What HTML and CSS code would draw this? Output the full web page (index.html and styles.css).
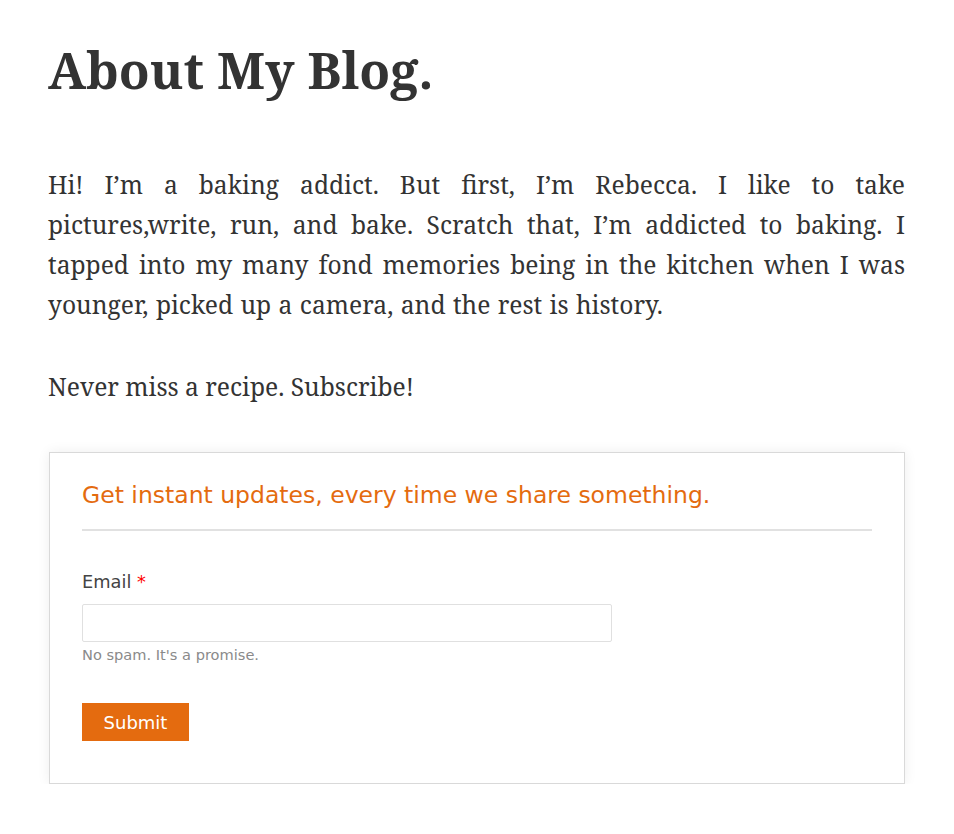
FILE: index.html
```html
<!DOCTYPE html>
<html>
<head>
<meta charset="utf-8">
<link rel="stylesheet" href="styles.css">
</head>
<body>
<main class="page">
  <h1 class="title">About My Blog.</h1>
  <p class="text">Hi! I’m a baking addict. But first, I’m Rebecca. I like to take pictures,write, run, and bake. Scratch that, I’m addicted to baking. I tapped into my many fond memories being in the kitchen when I was younger, picked up a camera, and the rest is history.</p>
  <p class="text">Never miss a recipe. Subscribe!</p>
  <form class="box">
    <h2 class="box-title">Get instant updates, every time we share something.</h2>
    <div class="field">
      <label class="label">Email <span class="req">*</span></label>
      <input class="input" type="text">
      <div class="hint">No spam. It's a promise.</div>
    </div>
    <button class="btn" type="button">Submit</button>
  </form>
</main>
</body>
</html>
```
FILE: styles.css
```css
html, body { margin: 0; padding: 0; background: #fff; }
.page {
  padding: 0 49px 0 48px;
  color: #333;
  font-family: "Noto Serif", "Droid Serif", "DejaVu Serif", serif;
}
.title {
  margin: 0;
  padding-top: 35px;
  font-size: 50.5px;
  line-height: 70px;
  font-weight: 700;
}
.text {
  margin: 60px 0 0;
  font-size: 24.6px;
  line-height: 40px;
  text-align: justify;
  word-spacing: 1px;
}
.text + .text { margin-top: 42px; word-spacing: 0; }
.box {
  margin: 45px 0 0 1px;
  border: 1px solid #d9d9d9;
  box-shadow: 0 0 12px rgba(0,0,0,0.07);
  padding: 28px 32px 42px 32px;
  font-family: "DejaVu Sans", Verdana, sans-serif;
}
.box-title {
  margin: 0;
  padding-bottom: 20px;
  border-bottom: 2px solid #e1e1e1;
  color: #e46b0f;
  font-size: 23.5px;
  font-weight: 400;
  line-height: 28px;
}
.field { margin-top: 40px; }
.label {
  display: block;
  font-size: 17.8px;
  line-height: 22px;
  color: #444;
}
.req { color: #f00; }
.input {
  display: block;
  box-sizing: border-box;
  margin-top: 11px;
  width: 530px;
  height: 38px;
  border: 1px solid #e0e0e0;
  border-radius: 2px;
  background: #fff;
}
.hint {
  margin-top: 5px;
  font-size: 14.6px;
  line-height: 16px;
  color: #8a8a8a;
}
.btn {
  display: block;
  margin-top: 40px;
  width: 107px;
  height: 38px;
  border: 0;
  border-radius: 0;
  background: #e46b0f;
  color: #fff;
  font-family: "DejaVu Sans", Verdana, sans-serif;
  font-size: 18px;
}
```
